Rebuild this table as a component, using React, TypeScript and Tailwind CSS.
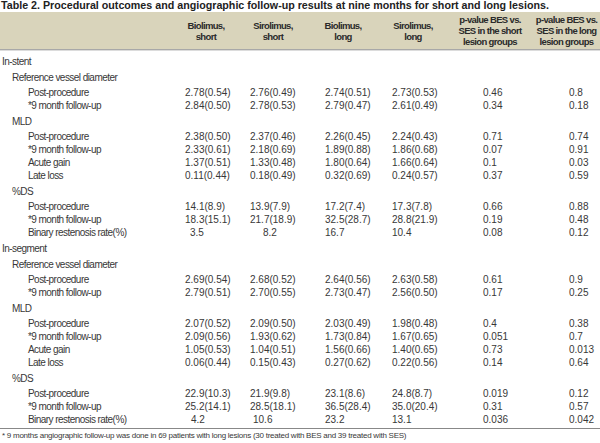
import React from "react";

type Item = { label: string; v: string[]; off?: number[] };
type Sub = { title: string; items: Item[] };
type Group = { title: string; subs: Sub[] };

const groups: Group[] = [
  {
    title: "In-stent",
    subs: [
      {
        title: "Reference vessel diameter",
        items: [
          { label: "Post-procedure", v: ["2.78(0.54)", "2.76(0.49)", "2.74(0.51)", "2.73(0.53)", "0.46", "0.8"] },
          { label: "*9 month follow-up", v: ["2.84(0.50)", "2.78(0.53)", "2.79(0.47)", "2.61(0.49)", "0.34", "0.18"] },
        ],
      },
      {
        title: "MLD",
        items: [
          { label: "Post-procedure", v: ["2.38(0.50)", "2.37(0.46)", "2.26(0.45)", "2.24(0.43)", "0.71", "0.74"] },
          { label: "*9 month follow-up", v: ["2.33(0.61)", "2.18(0.69)", "1.89(0.88)", "1.86(0.68)", "0.07", "0.91"] },
          { label: "Acute gain", v: ["1.37(0.51)", "1.33(0.48)", "1.80(0.64)", "1.66(0.64)", "0.1", "0.03"] },
          { label: "Late loss", v: ["0.11(0.44)", "0.18(0.49)", "0.32(0.69)", "0.24(0.57)", "0.37", "0.59"] },
        ],
      },
      {
        title: "%DS",
        items: [
          { label: "Post-procedure", v: ["14.1(8.9)", "13.9(7.9)", "17.2(7.4)", "17.3(7.8)", "0.66", "0.88"] },
          { label: "*9 month follow-up", v: ["18.3(15.1)", "21.7(18.9)", "32.5(28.7)", "28.8(21.9)", "0.19", "0.48"] },
          { label: "Binary restenosis rate(%)", v: ["3.5", "8.2", "16.7", "10.4", "0.08", "0.12"], off: [5, 13, 0, 0, 0, 0] },
        ],
      },
    ],
  },
  {
    title: "In-segment",
    subs: [
      {
        title: "Reference vessel diameter",
        items: [
          { label: "Post-procedure", v: ["2.69(0.54)", "2.68(0.52)", "2.64(0.56)", "2.63(0.58)", "0.61", "0.9"] },
          { label: "*9 month follow-up", v: ["2.79(0.51)", "2.70(0.55)", "2.73(0.47)", "2.56(0.50)", "0.17", "0.25"] },
        ],
      },
      {
        title: "MLD",
        items: [
          { label: "Post-procedure", v: ["2.07(0.52)", "2.09(0.50)", "2.03(0.49)", "1.98(0.48)", "0.4", "0.38"] },
          { label: "*9 month follow-up", v: ["2.09(0.56)", "1.93(0.62)", "1.73(0.84)", "1.67(0.65)", "0.051", "0.7"] },
          { label: "Acute gain", v: ["1.05(0.53)", "1.04(0.51)", "1.56(0.66)", "1.40(0.65)", "0.73", "0.013"] },
          { label: "Late loss", v: ["0.06(0.44)", "0.15(0.43)", "0.27(0.62)", "0.22(0.56)", "0.14", "0.64"] },
        ],
      },
      {
        title: "%DS",
        items: [
          { label: "Post-procedure", v: ["22.9(10.3)", "21.9(9.8)", "23.1(8.6)", "24.8(8.7)", "0.019", "0.12"] },
          { label: "*9 month follow-up", v: ["25.2(14.1)", "28.5(18.1)", "36.5(28.4)", "35.0(20.4)", "0.31", "0.57"] },
          { label: "Binary restenosis rate(%)", v: ["4.2", "10.6", "23.2", "13.1", "0.036", "0.042"], off: [6, 3, 0, 0, 0, 0] },
        ],
      },
    ],
  },
];

const grid = "grid grid-cols-[175px_62px_72px_68px_72px_82px_69px]";
const padCls = ["pl-[10px]", "pl-[13px]", "pl-[16px]", "pl-[15px]", "pl-[34px]", "pl-[38px]"];

const font = { fontFamily: '"Liberation Sans", Arial, sans-serif' };

export default function App() {
  return (
    <div className="w-[600px] h-[443px] bg-white overflow-hidden text-[#383838]" style={font}>
      <div className="h-[12px] pl-[1px] text-[10.7px] leading-[11px] font-bold text-[#222] whitespace-nowrap">
        Table 2. Procedural outcomes and angiographic follow-up results at nine months for short and long lesions.
      </div>
      <div className={`${grid} h-[37px] bg-[#d9d4bb] items-center text-center text-[9.5px] leading-[11px] font-bold tracking-[-0.65px] text-[#2a2a2a] whitespace-nowrap`}>
        <div />
        <div>Biolimus,<br />short</div>
        <div>Sirolimus,<br />short</div>
        <div>Biolimus,<br />long</div>
        <div>Sirolimus,<br />long</div>
        <div>p-value BES vs.<br />SES in the short<br />lesion groups</div>
        <div className="pl-[2px]">p-value BES vs.<br />SES in the long<br />lesion groups</div>
      </div>
      <div className="h-[1px] bg-[#a8a8a8]" />
      <div className="h-[1px] bg-[#dcdcdc]" />
      <div className="pt-[1px] text-[10px] leading-[13px]">
        {groups.map((g) => (
          <div key={g.title}>
            <div className="pt-[3px] pl-[2px] h-[16px] tracking-[-0.55px]">{g.title}</div>
            {g.subs.map((s, si) => (
              <div key={si}>
                <div className="pt-[3px] pb-[2px] pl-[12px] h-[18px] tracking-[-0.55px]">{s.title}</div>
                {s.items.map((it, ii) => (
                  <div key={ii} className={`${grid} h-[13px]`}>
                    <div className="pl-[28px] whitespace-nowrap tracking-[-0.55px]">{it.label}</div>
                    {it.v.map((val, vi) => (
                      <div key={vi} className={`${padCls[vi]} whitespace-nowrap`}>
                        <span style={it.off && it.off[vi] ? { marginLeft: it.off[vi] } : undefined}>{val}</span>
                      </div>
                    ))}
                  </div>
                ))}
              </div>
            ))}
          </div>
        ))}
      </div>
      <div className="mt-[2px] h-[1px] bg-[#888]" />
      <div className="pl-[2px] text-[8px] leading-[13px] tracking-[-0.25px] whitespace-nowrap">
        * 9 months angiographic follow-up was done in 69 patients with long lesions (30 treated with BES and 39 treated with SES)
      </div>
    </div>
  );
}
